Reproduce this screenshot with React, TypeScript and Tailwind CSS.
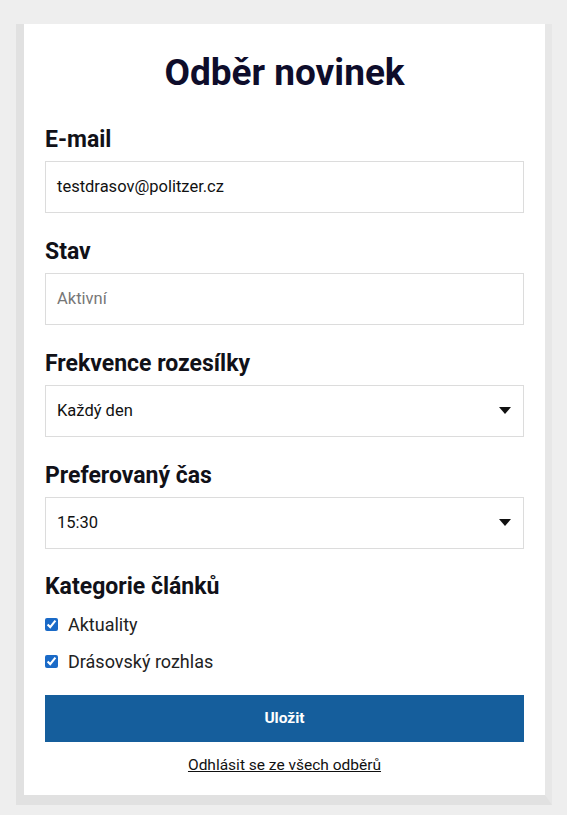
import React from "react";

function Label({ children }: { children: React.ReactNode }) {
  return (
    <div className="text-[23px] font-bold leading-[26px] text-[#111118] mb-[8px]">{children}</div>
  );
}

function Arrow() {
  return (
    <svg width="12" height="7" viewBox="0 0 12 7" className="absolute right-[12px] top-[21px]">
      <path d="M0 0 H12 L6 7 Z" fill="#111" />
    </svg>
  );
}

export default function App() {
  return (
    <div
      className="min-h-[815px] bg-[#eeeeee] pt-[24px] pl-[16px]"
      style={{ fontFamily: "Roboto, 'Liberation Sans', sans-serif" }}
    >
      <div className="w-[536px] border-l-[8px] border-b-[10px] border-r-[7px] border-l-[#e1e1e1] border-b-[#e1e1e1] border-r-[#e7e7e7] bg-white px-[21px] pt-[27px] pb-[19px]">
        <h1 className="text-center text-[37px] font-bold leading-[44px] text-[#0e0d2b] mb-[32px]">Odběr novinek</h1>

        <Label>E-mail</Label>
        <div className="h-[52px] border border-[#dcdcdc] flex items-center px-[11px] text-[16.5px] text-[#111] mb-[26px]">
          testdrasov@politzer.cz
        </div>

        <Label>Stav</Label>
        <div className="h-[52px] border border-[#dcdcdc] flex items-center px-[11px] text-[16.5px] text-[#777] mb-[26px]">
          Aktivní
        </div>

        <Label>Frekvence rozesílky</Label>
        <div className="relative h-[52px] border border-[#dcdcdc] flex items-center px-[11px] text-[16.5px] text-[#111] mb-[26px]">
          Každý den
          <Arrow />
        </div>

        <Label>Preferovaný čas</Label>
        <div className="relative h-[52px] border border-[#dcdcdc] flex items-center px-[11px] text-[16.5px] text-[#111] mb-[25px]">
          15:30
          <Arrow />
        </div>

        <div className="text-[23px] font-bold leading-[26px] text-[#111118] mb-[9px]">Kategorie článků</div>
        <label className="flex items-center gap-[10px] h-[30px] text-[18px] text-[#222]">
          <input type="checkbox" defaultChecked className="w-[13px] h-[13px] m-0 accent-[#1a6ac7]" />
          Aktuality
        </label>
        <label className="flex items-center gap-[10px] h-[30px] mt-[7px] text-[18px] text-[#222]">
          <input type="checkbox" defaultChecked className="w-[13px] h-[13px] m-0 accent-[#1a6ac7]" />
          Drásovský rozhlas
        </label>

        <button className="mt-[19px] w-full h-[47px] bg-[#155e9c] text-white text-[15.5px] font-bold">Uložit</button>
        <div className="text-center mt-[12px] text-[15.5px] text-[#111] underline leading-[22px]">Odhlásit se ze všech odběrů</div>
      </div>
    </div>
  );
}
